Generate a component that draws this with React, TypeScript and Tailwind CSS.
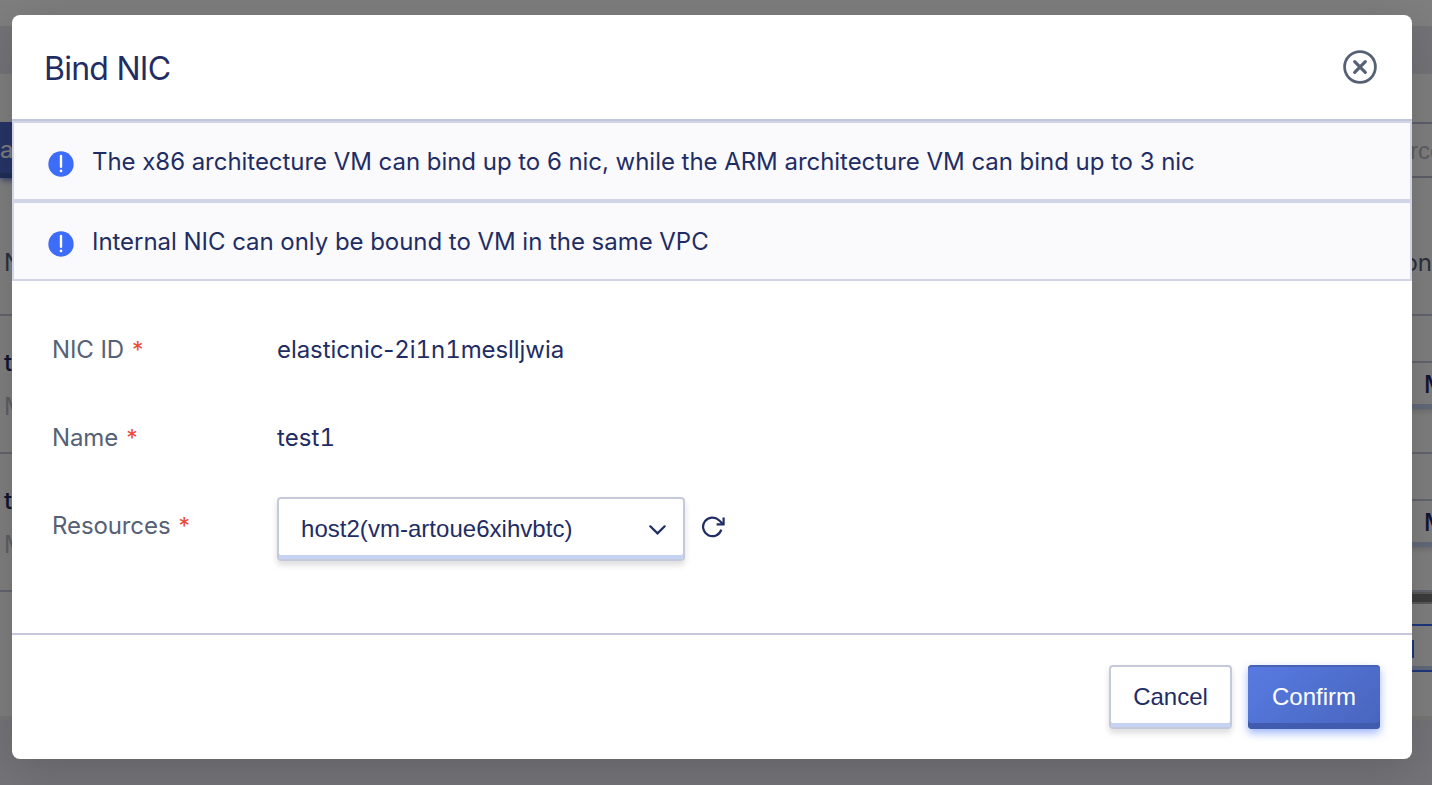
import React from "react";

function InfoIcon() {
  return (
    <svg width="26" height="26" viewBox="0 0 26 26" className="shrink-0">
      <circle cx="13" cy="13" r="12.7" fill="#3d6df8" />
      <path d="M13 5v10.8" stroke="#fff" strokeWidth="2.4" strokeLinecap="round" />
      <circle cx="13" cy="19.9" r="1.3" fill="#fff" />
    </svg>
  );
}

function Notice({ children }: { children: React.ReactNode }) {
  return (
    <div className="flex h-20 items-center border-2 border-[#d1d4e7] bg-[#fafafd] pl-[34px]">
      <div className="pt-1.5">
        <InfoIcon />
      </div>
      <p className="pt-0.5 pl-[18px] text-[24px] leading-8 tracking-[-0.04px] whitespace-nowrap text-[#1f2d64]">{children}</p>
    </div>
  );
}

function Label({ children }: { children: React.ReactNode }) {
  return (
    <div className="w-[225px] shrink-0 text-[24px] leading-8 tracking-[-0.1px] text-[#566176]">
      {children}
      <span className="ml-2 text-[23px] text-[#ea4a36]">*</span>
    </div>
  );
}

function TableRow() {
  return (
    <div className="flex h-[138px] justify-between border-t-2 border-[#c5c9dc]">
      <div className="pt-[29px] pl-1 text-[24px] leading-9">
        <div className="font-medium text-[#1f2d64]">t</div>
        <div className="pt-2 text-[#b9bcc4]">M</div>
      </div>
      <div className="mt-[45px] mr-[-56px] h-12 w-[100px] shrink-0 border-2 border-b-[5px] border-[#c5c9dc] border-b-[#c5d3f3] bg-white pl-[34px] text-[24px] leading-[44px] font-medium text-[#1f2d64] shadow-md">
        More
      </div>
    </div>
  );
}

function Page() {
  return (
    <div className="flex h-[785px] flex-col overflow-hidden bg-[#e8e9f0]">
      <div className="h-[26px] shrink-0 bg-white" />
      <div className="h-12 shrink-0 bg-[#e8e9f0]" />
      <div className="flex h-[646px] shrink-0 flex-col border-b-4 border-[#eeeeec] bg-white">
        <div className="flex h-[138px] shrink-0 justify-between pt-12">
          <div className="h-14 w-[70px] border-b-[5px] border-[#415caf] bg-[#4c6bce] text-[24px] leading-[56px] text-white shadow-md shadow-[#4c6bce]/60">
            ate
          </div>
          <div className="mr-[-66px] h-14 w-[100px] border-y-2 border-[#b9bfd2] pl-3 text-[24px] leading-[54px] text-[#b9bcc4] [font-family:'Liberation_Sans',sans-serif]">
            rces
          </div>
        </div>
        <div className="flex h-[102px] shrink-0 items-center justify-between text-[24px] text-[#566176]">
          <span className="pl-1">N</span>
          <span>Operation</span>
        </div>
        <TableRow />
        <TableRow />
        <div className="flex flex-col items-end border-t-2 border-[#c5c9dc]">
          <div className="h-3 w-6 border-y-2 border-[#b0b0b0] bg-[#7a7a7a]" />
          <div className="mt-5 h-12 w-6 border-y-2 border-[#3d6df8] bg-white">
            <div className="flex h-full flex-col justify-between">
              <div className="mt-3.5 ml-1 h-[18px] w-0.5 bg-[#3d6df8]" />
              <div className="h-1 bg-[#c5d3f3]" />
            </div>
          </div>
        </div>
      </div>
    </div>
  );
}

export default function App() {
  return (
    <div className="relative h-[785px] w-full overflow-hidden [font-family:Inter,'Liberation_Sans',sans-serif]">
      <Page />
      <div className="absolute inset-0 bg-black/50 pt-[15px] pl-3">
        <section className="flex h-[744px] w-[1400px] flex-col overflow-hidden rounded-lg bg-white shadow-[0_8px_48px_rgba(0,0,0,0.17)]">
          <header className="flex h-[106px] shrink-0 items-center justify-between border-b-2 border-[#bfc8da] pr-[35px] pl-8">
            <h1 className="pt-[3px] text-[32px] leading-10 tracking-[-0.75px] text-[#1f2d64]">Bind NIC</h1>
            <button aria-label="Close" className="text-[#566176]">
              <svg width="34" height="34" viewBox="0 0 34 34" fill="none" stroke="currentColor">
                <circle cx="17" cy="17" r="15.4" strokeWidth="2.8" />
                <path d="m11.7 11.7 10.6 10.6m0-10.6L11.7 22.3" strokeWidth="3.2" strokeLinecap="round" />
              </svg>
            </button>
          </header>
          <Notice>The x86 architecture VM can bind up to 6 nic, while the ARM architecture VM can bind up to 3 nic</Notice>
          <Notice>Internal NIC can only be bound to VM in the same VPC</Notice>
          <div className="flex h-[354px] shrink-0 flex-col border-b-2 border-[#c5c9dc] pt-[53px] pl-10 text-[24px] leading-8 text-[#1f2d64]">
            <div className="flex h-[88px]">
              <Label>NIC ID</Label>
              <span className="tracking-[-0.07px]">
                elasticnic-<span className="tabular-nums">2i1n1</span>meslljwia
              </span>
            </div>
            <div className="flex h-[75px]">
              <Label>Name</Label>
              <span className="tracking-[0.1px] tabular-nums">test1</span>
            </div>
            <div className="flex h-16">
              <div className="pt-[13px]">
                <Label>Resources</Label>
              </div>
              <button className="flex h-16 w-[408px] items-center justify-between rounded border-2 border-[#c5c9dc] pr-[17px] pl-[22px] shadow-[inset_0_-4px_0_#c5d3f3,0_4px_6px_rgba(0,0,0,0.14)]">
                <span className="tracking-[0.03px] [font-family:'Liberation_Sans',sans-serif]">host2(vm-artoue6xihvbtc)</span>
                <svg width="17" height="10" viewBox="0 0 17 10" fill="none" stroke="currentColor" strokeWidth="2.2" strokeLinecap="round" className="mt-0.5">
                  <path d="m1.3 1.3 7.2 7.1 7.2-7.1" />
                </svg>
              </button>
              <svg width="24" height="22" viewBox="0 0 24 22" fill="none" stroke="currentColor" strokeWidth="2.2" className="mt-[19px] ml-4">
                <path d="M20.3 13.6A9.3 9.3 0 1 1 18 4.3L21.7 7.7" />
                <path d="M22.6 1.6v6.8h-7" />
              </svg>
            </div>
          </div>
          <footer className="flex justify-end gap-4 pt-[30px] pr-8 text-[24px] [font-family:'Liberation_Sans',sans-serif]">
            <button className="h-16 w-[123px] rounded border-2 border-[#c5c9dc] text-[#1f2d64] shadow-[inset_0_-4px_0_#c5d3f3,0_4px_6px_rgba(0,0,0,0.14)]">
              Cancel
            </button>
            <button className="h-16 w-[132px] rounded bg-linear-135 from-[#587be2] to-[#4865bd] text-white shadow-[inset_0_2px_0_#4562b5,inset_0_-6px_0_#415caf,0_4px_8px_rgba(61,109,248,0.5)]">
              Confirm
            </button>
          </footer>
        </section>
      </div>
    </div>
  );
}
